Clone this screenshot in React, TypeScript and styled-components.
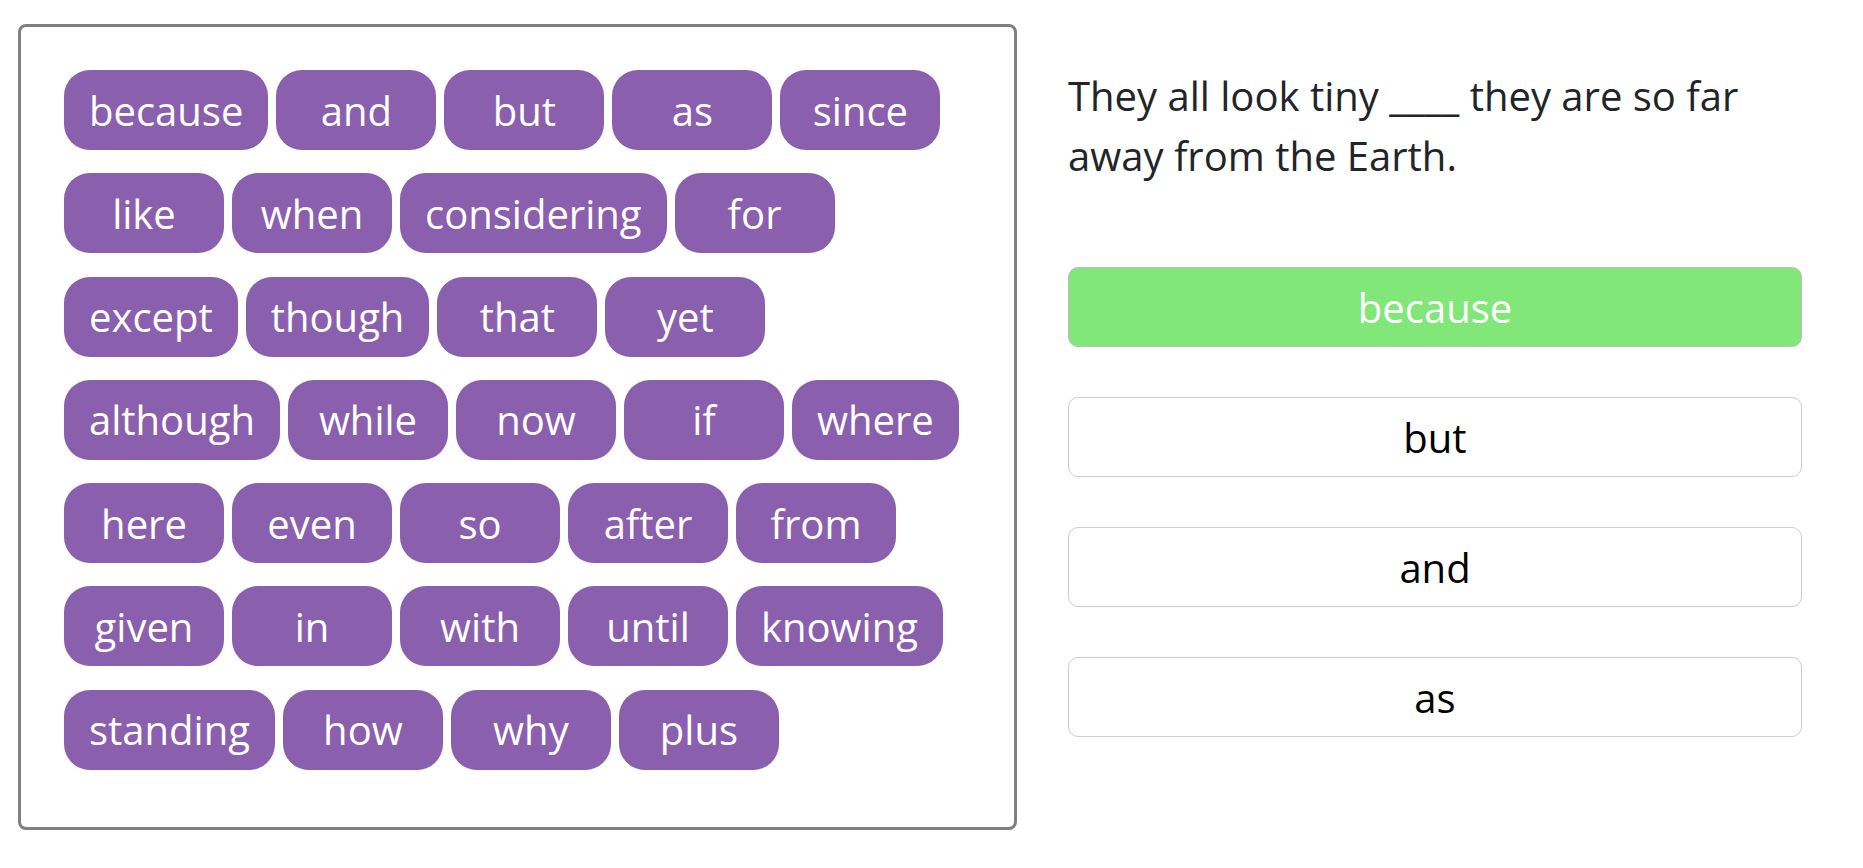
import React from "react";
import styled, { createGlobalStyle } from "styled-components";

const GlobalStyle = createGlobalStyle`
  html, body {
    margin: 0;
    padding: 0;
    background: #ffffff;
  }
  body {
    font-family: "Open Sans", "Noto Sans", sans-serif;
  }
  * { box-sizing: border-box; }
`;

const Page = styled.div`
  display: flex;
  align-items: flex-start;
  gap: 51px;
  padding: 24px 0 0 18px;
`;

const WordBank = styled.div`
  width: 999px;
  height: 806px;
  border: 3px solid #808080;
  border-radius: 8px;
  padding: 43px;
  display: flex;
  flex-wrap: wrap;
  align-content: flex-start;
  column-gap: 8px;
  row-gap: 23.3px;
`;

const Chip = styled.div`
  display: inline-flex;
  align-items: center;
  justify-content: center;
  min-width: 160px;
  height: 80px;
  padding: 0 25px;
  border-radius: 26px;
  background: #8a5fad;
  color: #ffffff;
  font-size: 40px;
  white-space: nowrap;
`;

const QuestionColumn = styled.div`
  width: 734px;
  padding-top: 42px;
  display: flex;
  flex-direction: column;
`;

const Question = styled.p`
  margin: 0 0 81px 0;
  font-size: 40px;
  line-height: 60px;
  color: #212529;
`;

const Options = styled.div`
  display: flex;
  flex-direction: column;
  gap: 50px;
`;

const Option = styled.div<{ $correct?: boolean }>`
  height: 80px;
  border: 1px solid ${(p) => (p.$correct ? "#bdbdbd" : "#cccccc")};
  border-radius: 10px;
  background: ${(p) => (p.$correct ? "#80e778" : "#ffffff")};
  color: ${(p) => (p.$correct ? "#ffffff" : "#000000")};
  font-size: 40px;
  display: flex;
  align-items: center;
  justify-content: center;
`;

const words = [
  "because", "and", "but", "as", "since",
  "like", "when", "considering", "for",
  "except", "though", "that", "yet",
  "although", "while", "now", "if", "where",
  "here", "even", "so", "after", "from",
  "given", "in", "with", "until", "knowing",
  "standing", "how", "why", "plus",
];

const options = [
  { text: "because", correct: true },
  { text: "but", correct: false },
  { text: "and", correct: false },
  { text: "as", correct: false },
];

export default function App() {
  return (
    <>
      <GlobalStyle />
      <Page>
        <WordBank>
          {words.map((w) => (
            <Chip key={w}>{w}</Chip>
          ))}
        </WordBank>
        <QuestionColumn>
          <Question>They all look tiny ____ they are so far away from the Earth.</Question>
          <Options>
            {options.map((o) => (
              <Option key={o.text} $correct={o.correct}>
                {o.text}
              </Option>
            ))}
          </Options>
        </QuestionColumn>
      </Page>
    </>
  );
}
